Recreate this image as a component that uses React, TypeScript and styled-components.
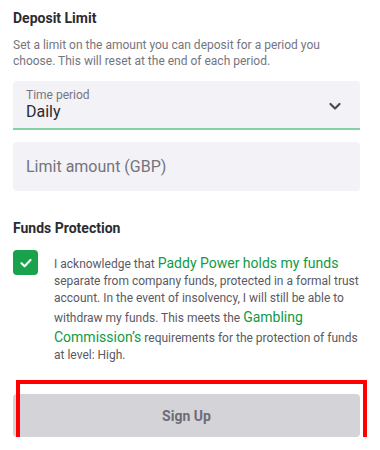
import React from "react";
import styled, { createGlobalStyle } from "styled-components";

const Global = createGlobalStyle`
  html, body { margin: 0; padding: 0; background: #ffffff; }
  body { font-family: Roboto, "Liberation Sans", Arial, sans-serif; -webkit-font-smoothing: antialiased; }
  * { box-sizing: border-box; }
`;

const Page = styled.div`
  width: 380px;
  padding: 8px 20px 0 13px;
  display: flex;
  flex-direction: column;
`;

const Heading = styled.h2<{ $mt?: number }>`
  margin: ${(p) => p.$mt ?? 0}px 0 0 0;
  font-size: 14px;
  line-height: 20px;
  font-weight: 700;
  color: #2b2b34;
`;

const Description = styled.p`
  margin: 9px 0 0 0;
  max-width: 330px;
  font-size: 12px;
  line-height: 16px;
  color: #75757e;
`;

const Field = styled.div<{ $mt: number; $active?: boolean }>`
  margin-top: ${(p) => p.$mt}px;
  height: 49px;
  background: #f3f2f7;
  border-radius: 4px 4px ${(p) => (p.$active ? "0 0" : "4px 4px")};
  border-bottom: ${(p) => (p.$active ? "2px solid #86d0a8" : "none")};
  padding: 0 13px;
  display: flex;
  align-items: center;
  justify-content: space-between;
`;

const FieldText = styled.div`
  display: flex;
  flex-direction: column;
`;

const FieldLabel = styled.span`
  font-size: 12px;
  line-height: 14px;
  color: #76767f;
`;

const FieldValue = styled.span`
  font-size: 16px;
  line-height: 20px;
  color: #2b2b34;
`;

const Placeholder = styled.span`
  font-size: 16px;
  line-height: 20px;
  color: #74747d;
`;

const Chevron = styled.svg`
  width: 14px;
  height: 14px;
  margin-right: 5px;
  margin-top: 2px;
`;

const CheckRow = styled.div`
  margin-top: 12px;
  display: flex;
  align-items: flex-start;
  gap: 16px;
`;

const Box = styled.div`
  flex: 0 0 25px;
  width: 25px;
  height: 25px;
  border-radius: 4px;
  background: #17a24b;
  display: flex;
  align-items: center;
  justify-content: center;
`;

const Consent = styled.p`
  margin: 3px -4px 0 0;
  font-size: 12px;
  line-height: 17px;
  color: #5a5a63;
`;

const Link = styled.span`
  font-size: 14px;
  line-height: 20px;
  color: #109a46;
`;

const ButtonWrap = styled.div`
  position: relative;
  margin-top: 30px;
`;

const SignUp = styled.button`
  width: 100%;
  height: 43px;
  border: none;
  border-radius: 4px;
  background: #d4d4d8;
  color: #6c6c76;
  font-family: inherit;
  font-size: 14px;
  font-weight: 700;
`;

const Highlight = styled.div`
  position: absolute;
  top: -14px;
  left: 3px;
  right: -7px;
  bottom: -6px;
  border: 4px solid #ff0000;
  pointer-events: none;
`;

export default function App() {
  return (
    <>
      <Global />
      <Page>
        <Heading>Deposit Limit</Heading>
        <Description>
          Set a limit on the amount you can deposit for a period you choose. This will reset at the end of each period.
        </Description>
        <Field $mt={12} $active>
          <FieldText>
            <FieldLabel>Time period</FieldLabel>
            <FieldValue>Daily</FieldValue>
          </FieldText>
          <Chevron viewBox="0 0 14 14">
            <polyline points="2.5,5 7,9.5 11.5,5" fill="none" stroke="#4a4a54" strokeWidth="2.2" strokeLinecap="round" strokeLinejoin="round" />
          </Chevron>
        </Field>
        <Field $mt={12}>
          <Placeholder>Limit amount (GBP)</Placeholder>
        </Field>
        <Heading $mt={27}>Funds Protection</Heading>
        <CheckRow>
          <Box>
            <svg width="14" height="14" viewBox="0 0 14 14">
              <polyline points="2.5,7.2 5.6,10.2 11.5,4" fill="none" stroke="#ffffff" strokeWidth="2.2" strokeLinecap="round" strokeLinejoin="round" />
            </svg>
          </Box>
          <Consent>
            I acknowledge that <Link>Paddy Power holds my funds</Link> separate from company funds, protected in a formal trust
            account. In the event of insolvency, I will still be able to withdraw my funds. This meets the{" "}
            <Link>Gambling Commission’s</Link> requirements for the protection of funds at{"\u00a0"}level: High.
          </Consent>
        </CheckRow>
        <ButtonWrap>
          <SignUp>Sign Up</SignUp>
          <Highlight />
        </ButtonWrap>
      </Page>
    </>
  );
}
